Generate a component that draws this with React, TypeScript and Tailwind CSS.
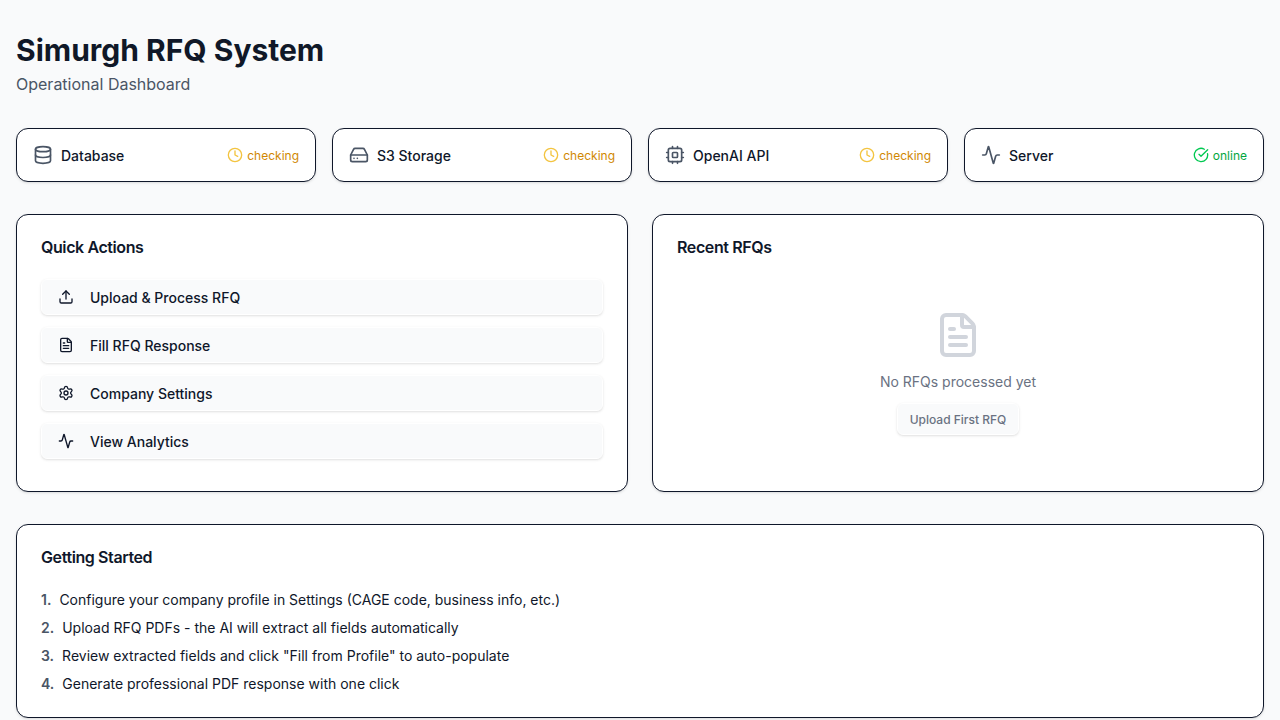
import { Activity, CircleCheckBig, Clock, Database, FileText, HardDrive, Settings, Upload } from "lucide-react";
import type { ComponentType } from "react";

type Icon = ComponentType<{ className?: string }>;

function Chip({ className }: { className?: string }) {
  return (
    <svg viewBox="0 0 24 24" fill="none" stroke="currentColor" strokeWidth="2" strokeLinecap="round" strokeLinejoin="round" className={className}>
      <rect width="16" height="16" x="4" y="4" rx="2" />
      <rect width="6" height="6" x="9" y="9" rx="1" />
      <path d="M15 2v2M15 20v2M2 15h2M2 9h2M20 15h2M20 9h2M9 2v2M9 20v2" />
    </svg>
  );
}

const services: { name: string; icon: Icon; online?: boolean }[] = [
  { name: "Database", icon: Database },
  { name: "S3 Storage", icon: HardDrive },
  { name: "OpenAI API", icon: Chip },
  { name: "Server", icon: Activity, online: true },
];

const actions: { label: string; icon: Icon }[] = [
  { label: "Upload & Process RFQ", icon: Upload },
  { label: "Fill RFQ Response", icon: FileText },
  { label: "Company Settings", icon: Settings },
  { label: "View Analytics", icon: Activity },
];

const steps = [
  "Configure your company profile in Settings (CAGE code, business info, etc.)",
  "Upload RFQ PDFs - the AI will extract all fields automatically",
  'Review extracted fields and click "Fill from Profile" to auto-populate',
  "Generate professional PDF response with one click",
];

const card = "rounded-xl border border-[#0f172a] bg-white shadow-sm";
const button = "rounded-md border border-white bg-gray-50 font-medium shadow-sm";

export default function App() {
  return (
    <div className="h-screen overflow-hidden bg-gray-50 px-4 pt-8 font-['Inter',sans-serif] text-[#0f172a] antialiased">
      <header className="mb-8">
        <h1 className="text-3xl font-bold text-gray-900">Simurgh RFQ System</h1>
        <p className="mt-1 text-base text-gray-600">Operational Dashboard</p>
      </header>

      <div className="mb-8 grid grid-cols-4 gap-4">
        {services.map(({ name, icon: Icon, online }) => (
          <div key={name} className={`${card} flex h-[54px] items-center justify-between px-4`}>
            <div className="flex items-center gap-2">
              <Icon className="size-5 text-gray-600" />
              <span className="pt-0.5 text-sm font-medium">{name}</span>
            </div>
            <div className="flex items-center gap-1">
              {online ? <CircleCheckBig className="size-4 text-green-500" /> : <Clock className="size-4 text-yellow-500 opacity-75" />}
              <span className={online ? "pt-0.5 text-xs text-green-600" : "pt-0.5 text-xs text-yellow-600"}>{online ? "online" : "checking"}</span>
            </div>
          </div>
        ))}
      </div>

      <div className="mb-8 grid grid-cols-2 gap-6">
        <section className={`${card} h-[278px] px-6 pt-6`}>
          <h2 className="text-base leading-4 font-semibold tracking-tight">Quick Actions</h2>
          <div className="mt-6 flex flex-col gap-3">
            {actions.map(({ label, icon: Icon }) => (
              <button key={label} className={`${button} flex h-9 items-center gap-4 px-4 text-sm`}>
                <Icon className="size-4" />
                <span className="pt-0.5">{label}</span>
              </button>
            ))}
          </div>
        </section>
        <section className={`${card} h-[278px] px-6 pt-6`}>
          <h2 className="text-base leading-4 font-semibold tracking-tight">Recent RFQs</h2>
          <div className="mt-6 flex flex-col items-center pt-8 text-gray-500">
            <FileText className="size-12 text-gray-300" />
            <p className="mt-[13px] text-sm">No RFQs processed yet</p>
            <button className={`${button} mt-[11px] h-8 px-3 pt-0.5 text-xs`}>Upload First RFQ</button>
          </div>
        </section>
      </div>

      <section className={`${card} h-[194px] px-6 pt-6`}>
        <h2 className="text-base leading-4 font-semibold tracking-tight">Getting Started</h2>
        <ol className="mt-[25px] flex flex-col gap-2 text-sm">
          {steps.map((step, i) => (
            <li key={step} className="flex gap-2">
              <span className="font-semibold text-gray-600">{i + 1}.</span>
              <span>{step}</span>
            </li>
          ))}
        </ol>
      </section>
    </div>
  );
}
